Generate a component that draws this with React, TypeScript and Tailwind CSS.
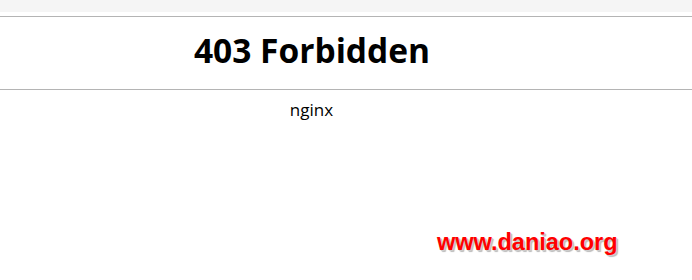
export default function App() {
  return (
    <div className="relative h-[280px] w-[692px] overflow-hidden bg-white font-['Open_Sans',sans-serif] text-black">
      <div className="h-3 bg-[#f5f5f5]" />
      <div className="mt-1 h-px bg-[#b4b4b4]" />
      <div className="w-[624px] pt-[9px] text-center">
        <h1 className="text-[33.5px] font-bold leading-[48px]">403 Forbidden</h1>
      </div>
      <div className="mt-[15px] h-px bg-[#b4b4b4]" />
      <div className="w-[623px] pt-[8px] text-center text-[17px] leading-[24px]">nginx</div>
      <div className="absolute left-[437px] top-[225px] font-['Liberation_Sans',Arial,sans-serif] text-[23.5px] font-bold text-[#ff0000] [text-shadow:1px_1px_0_#ccc,2px_2px_1px_#bbb,-1px_-1px_0_#fff]">
        www.daniao.org
      </div>
    </div>
  );
}
